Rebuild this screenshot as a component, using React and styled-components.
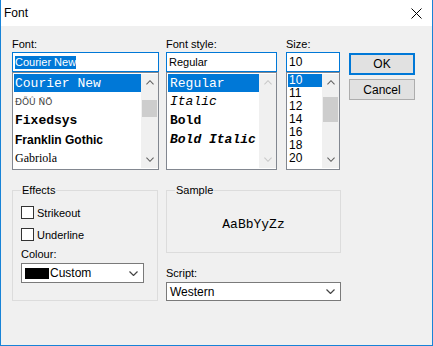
import React from "react";
import styled, { createGlobalStyle } from "styled-components";

const GlobalStyle = createGlobalStyle`
  html, body { margin: 0; padding: 0; background: #fff; }
  body {
    font-family: "Liberation Sans", Arial, sans-serif;
    font-size: 11px;
    color: #000;
  }
`;

const Chevron = ({ dir = "down", color = "#606060", w = 9, h = 5 }) => (
  <svg width={w} height={h} viewBox="0 0 9 5">
    <polyline
      points={dir === "down" ? "0.5,0.5 4.5,4.5 8.5,0.5" : "0.5,4.5 4.5,0.5 8.5,4.5"}
      fill="none"
      stroke={color}
      strokeWidth="1.2"
    />
  </svg>
);

const ScrollBar = ({ thumbTop, thumbHeight, disabled }) => (
  <Bar>
    <Arrow>
      <Chevron dir="up" w={8} h={5} color={disabled ? "#c8c8c8" : "#606060"} />
    </Arrow>
    <Track>{!disabled && <Thumb $top={thumbTop} $h={thumbHeight} />}</Track>
    <Arrow>
      <Chevron dir="down" w={8} h={5} color={disabled ? "#c8c8c8" : "#606060"} />
    </Arrow>
  </Bar>
);

const fonts = [
  { name: "Courier New", family: '"Liberation Mono", monospace', size: 13, h: 18, selected: true },
  { name: "ÐÕÛ ÑÖ", family: '"DejaVu Sans", sans-serif', size: 9, h: 19, color: "#444" },
  { name: "Fixedsys", family: '"Liberation Mono", monospace', size: 13, h: 19, weight: 700 },
  { name: "Franklin Gothic", family: '"Liberation Sans", sans-serif', size: 12, h: 19, weight: 700 },
  { name: "Gabriola", family: '"Liberation Serif", serif', size: 12, h: 19 },
];

const styles = [
  { name: "Regular", selected: true },
  { name: "Italic", italic: true },
  { name: "Bold", weight: 700 },
  { name: "Bold Italic", weight: 700, italic: true },
];

const sizes = ["10", "11", "12", "14", "16", "18", "20"];

const App = () => {
  return (
    <>
      <GlobalStyle />
      <Window>
        <TitleBar>
          <Title>Font</Title>
          <svg width="11" height="11" viewBox="0 0 11 11">
            <path d="M0.5 0.5 L10.5 10.5 M10.5 0.5 L0.5 10.5" stroke="#000" strokeWidth="1" />
          </svg>
        </TitleBar>
        <Body>
          <TopRow>
            <Column $w={147}>
              <Label>Font:</Label>
              <TextBox>
                <Picked>Courier New</Picked>
              </TextBox>
              <ListBox>
                <Items>
                  {fonts.map((f) => (
                    <Row
                      key={f.name}
                      $h={f.h}
                      $sel={f.selected}
                      style={{
                        fontFamily: f.family,
                        fontSize: f.size,
                        fontWeight: f.weight || 400,
                        color: f.selected ? "#fff" : f.color || "#000",
                      }}
                    >
                      {f.name}
                    </Row>
                  ))}
                </Items>
                <ScrollBar thumbTop={9} thumbHeight={17} />
              </ListBox>
            </Column>

            <Column $w={111} $ml={7}>
              <Label>Font style:</Label>
              <TextBox>Regular</TextBox>
              <ListBox>
                <Items>
                  {styles.map((s, i) => (
                    <StyleRow
                      key={s.name}
                      $h={i === 0 ? 18 : 19}
                      $sel={s.selected}
                      $bold={s.weight === 700}
                      $italic={s.italic}
                    >
                      {s.name}
                    </StyleRow>
                  ))}
                </Items>
                <ScrollBar disabled />
              </ListBox>
            </Column>

            <Column $w={54} $ml={9}>
              <Label>Size:</Label>
              <TextBox $size={12}>10</TextBox>
              <ListBox>
                <Items>
                  {sizes.map((s, i) => (
                    <SizeRow key={s} $sel={i === 0}>
                      {s}
                    </SizeRow>
                  ))}
                </Items>
                <ScrollBar thumbTop={6} thumbHeight={25} />
              </ListBox>
            </Column>

            <ButtonColumn>
              <Button $primary>OK</Button>
              <Button>Cancel</Button>
            </ButtonColumn>
          </TopRow>

          <BottomRow>
            <GroupBox $w={146} $h={117}>
              <Legend>Effects</Legend>
              <CheckRow $mt={9}>
                <CheckBox />
                Strikeout
              </CheckRow>
              <CheckRow $mt={9}>
                <CheckBox />
                Underline
              </CheckRow>
              <FieldLabel $mt={6}>Colour:</FieldLabel>
              <Combo $w={123} $h={20} $mt={2}>
                <ComboValue>
                  <Swatch />
                  Custom
                </ComboValue>
                <Chevron color="#444" />
              </Combo>
            </GroupBox>

            <RightColumn>
              <GroupBox $w={175} $h={69}>
                <Legend>Sample</Legend>
                <SampleArea>AaBbYyZz</SampleArea>
              </GroupBox>
              <FieldLabel $mt={13}>Script:</FieldLabel>
              <Combo $w={175} $h={19} $mt={2}>
                <ComboValue>Western</ComboValue>
                <Chevron color="#444" />
              </Combo>
            </RightColumn>
          </BottomRow>
        </Body>
      </Window>
    </>
  );
};

const Window = styled.div`
  width: 433px;
  height: 346px;
  box-sizing: border-box;
  border: 1px solid #1883d7;
  border-top: none;
  display: flex;
  flex-direction: column;
`;

const TitleBar = styled.div`
  height: 26px;
  flex-shrink: 0;
  background: #fff;
  display: flex;
  align-items: center;
  justify-content: space-between;
  padding: 0 10px 0 3px;
`;

const Title = styled.div`
  font-size: 12px;
`;

const Body = styled.div`
  flex: 1;
  background: #f0f0f0;
  padding: 12px 0 0 11px;
`;

const TopRow = styled.div`
  display: flex;
  align-items: flex-start;
`;

const Column = styled.div`
  display: flex;
  flex-direction: column;
  width: ${(p) => p.$w}px;
  margin-left: ${(p) => p.$ml || 0}px;
`;

const Label = styled.div`
  height: 14px;
  line-height: 13px;
`;

const TextBox = styled.div`
  height: 20px;
  box-sizing: border-box;
  border: 1px solid #0078d7;
  background: #fff;
  padding: 0 2px;
  display: flex;
  align-items: center;
  font-size: ${(p) => p.$size || 11}px;
`;

const Picked = styled.span`
  background: #0078d7;
  color: #fff;
  line-height: 13px;
`;

const ListBox = styled.div`
  height: 98px;
  box-sizing: border-box;
  border: 1px solid #828790;
  background: #fff;
  display: flex;
  padding: 1px 0 0 1px;
`;

const Items = styled.div`
  flex: 1;
  overflow: hidden;
`;

const Row = styled.div`
  height: ${(p) => p.$h}px;
  display: flex;
  align-items: center;
  padding-left: 1px;
  white-space: nowrap;
  background: ${(p) => (p.$sel ? "#0078d7" : "transparent")};
`;

const StyleRow = styled(Row)`
  font-family: "Liberation Mono", "Courier New", monospace;
  font-size: 13px;
  font-weight: ${(p) => (p.$bold ? 700 : 400)};
  font-style: ${(p) => (p.$italic ? "italic" : "normal")};
  color: ${(p) => (p.$sel ? "#fff" : "#000")};
  padding-left: 2px;
`;

const SizeRow = styled.div`
  height: 13px;
  line-height: 13px;
  font-size: 12px;
  padding-left: 1px;
  background: ${(p) => (p.$sel ? "#0078d7" : "transparent")};
  color: ${(p) => (p.$sel ? "#fff" : "#000")};
`;

const Bar = styled.div`
  width: 17px;
  display: flex;
  flex-direction: column;
  background: #f0f0f0;
  margin-bottom: 1px;
`;

const Arrow = styled.div`
  height: 17px;
  display: flex;
  align-items: center;
  justify-content: center;
`;

const Track = styled.div`
  flex: 1;
`;

const Thumb = styled.div`
  margin: ${(p) => p.$top}px 1px 0;
  height: ${(p) => p.$h}px;
  background: #cdcdcd;
`;

const ButtonColumn = styled.div`
  display: flex;
  flex-direction: column;
  gap: 4px;
  margin-left: 9px;
  padding-top: 15px;
`;

const Button = styled.div`
  width: 66px;
  height: ${(p) => (p.$primary ? 22 : 21)}px;
  box-sizing: border-box;
  background: #e1e1e1;
  border: ${(p) => (p.$primary ? "2px solid #0078d7" : "1px solid #adadad")};
  display: flex;
  align-items: center;
  justify-content: center;
  font-size: 12px;
`;

const BottomRow = styled.div`
  display: flex;
  align-items: flex-start;
  margin-top: 14px;
`;

const RightColumn = styled.div`
  display: flex;
  flex-direction: column;
  margin-left: 8px;
`;

const GroupBox = styled.fieldset`
  margin: 0;
  padding: 0 8px;
  min-width: 0;
  box-sizing: border-box;
  width: ${(p) => p.$w}px;
  height: ${(p) => p.$h}px;
  border: 1px solid #dcdcdc;
  display: flex;
  flex-direction: column;
`;

const Legend = styled.legend`
  padding: 0 1px;
  line-height: 13px;
  font-size: 11px;
`;

const CheckRow = styled.div`
  display: flex;
  align-items: center;
  gap: 3px;
  height: 13px;
  margin-top: ${(p) => p.$mt}px;
`;

const CheckBox = styled.div`
  width: 13px;
  height: 13px;
  box-sizing: border-box;
  border: 1px solid #333;
  background: #fff;
`;

const FieldLabel = styled.div`
  height: 14px;
  line-height: 14px;
  margin-top: ${(p) => p.$mt}px;
`;

const Combo = styled.div`
  width: ${(p) => p.$w}px;
  height: ${(p) => p.$h}px;
  margin-top: ${(p) => p.$mt}px;
  box-sizing: border-box;
  border: 1px solid #7a7a7a;
  background: #fff;
  display: flex;
  align-items: center;
  justify-content: space-between;
  padding: 0 5px 0 3px;
`;

const ComboValue = styled.div`
  display: flex;
  align-items: center;
  gap: 1px;
  font-size: 12px;
`;

const Swatch = styled.div`
  width: 24px;
  height: 11px;
  background: #000;
`;

const SampleArea = styled.div`
  height: 54px;
  display: flex;
  align-items: center;
  justify-content: center;
  font-family: "Liberation Mono", "Courier New", monospace;
  font-size: 13px;
`;

export default App;
